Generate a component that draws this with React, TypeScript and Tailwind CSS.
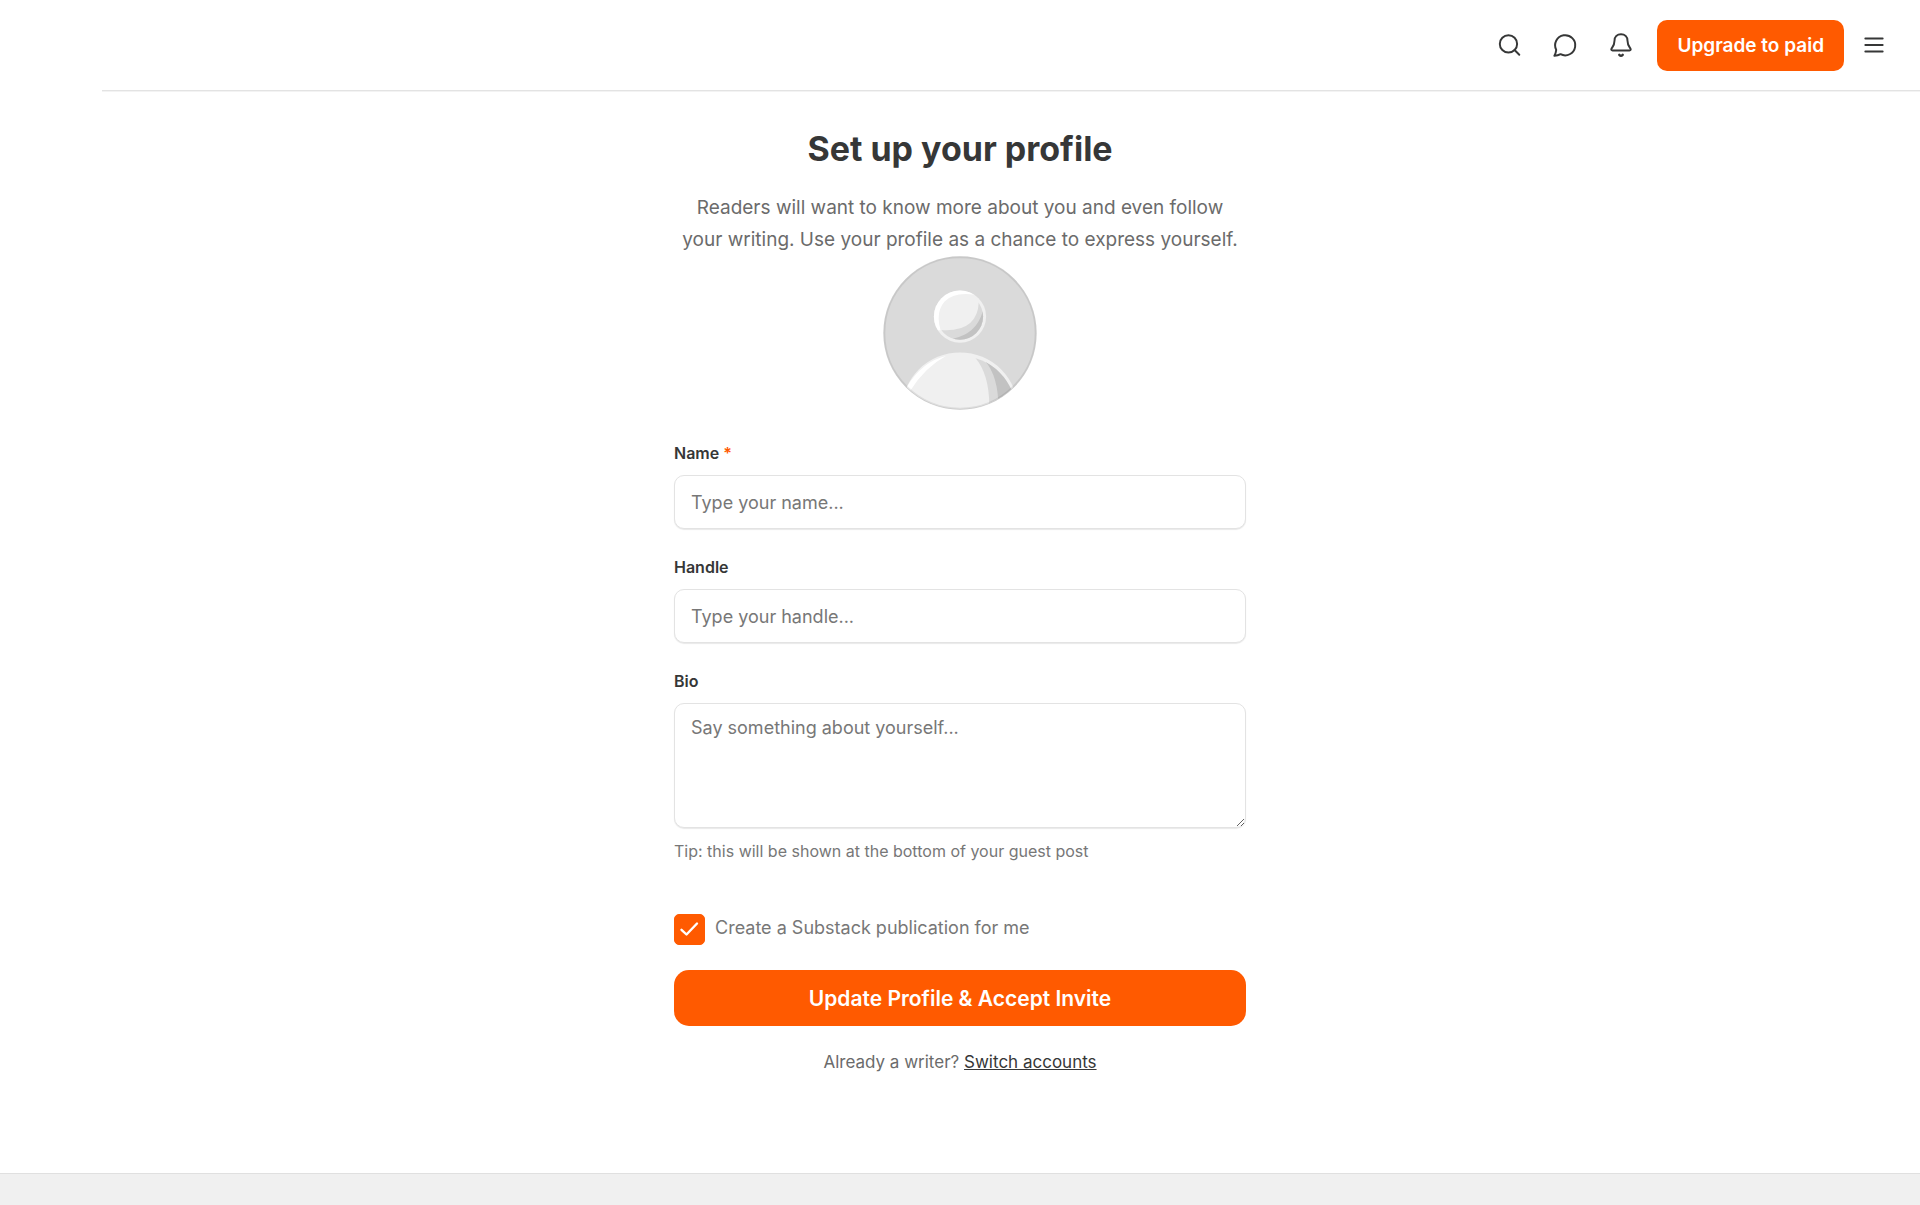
import React, { useState } from 'react';

interface FieldLabelProps {
  htmlFor: string;
  text: string;
  required?: boolean;
}

const inputClasses =
  'block w-full rounded-[10px] border border-[#e3e3e3] bg-white px-4 text-[18px] text-[#363737] placeholder:text-[#777777] shadow-[0_1px_1px_rgba(0,0,0,0.09)] outline-none focus:border-[#ff5a00]';

const FieldLabel: React.FC<FieldLabelProps> = ({ htmlFor, text, required }) => (
  <label htmlFor={htmlFor} className="block text-[16px] leading-6 font-semibold text-[#363737]">
    {text}
    {required && <span className="ml-1 text-[#ff5a00]">*</span>}
  </label>
);

const IconButton: React.FC<{ label: string; children: React.ReactNode }> = ({ label, children }) => (
  <button type="button" aria-label={label} className="flex size-14 items-center justify-center text-[#363737]">
    <svg
      viewBox="0 0 24 24"
      className="size-[26px]"
      fill="none"
      stroke="currentColor"
      strokeWidth="1.8"
      strokeLinecap="round"
      strokeLinejoin="round"
      aria-hidden="true"
    >
      {children}
    </svg>
  </button>
);

const Header: React.FC = () => (
  <header className="ml-[102px] flex h-[91px] items-center justify-end border-b border-[#e3e3e3] pr-[18px] shadow-[0_1px_0_#f3f3f3]">
    <IconButton label="Search">
      <circle cx="11.5" cy="11" r="8" />
      <path d="m21.5 21-4.35-4.35" />
    </IconButton>
    <IconButton label="Messages">
      <path d="M7.9 20.5A9.3 9.3 0 1 0 3.9 16.5Q3.6 19.5 2.2 22Q5.500 21.8 7.9 20.5Z" />
    </IconButton>
    <IconButton label="Notifications">
      <path d="M12 2C8.500 2 6 4.500 6 8C6 12 4.400 13.500 3.300 15.200C2.700 16.300 3.100 17 4.200 17H19.800C20.900 17 21.300 16.300 20.700 15.200C19.600 13.500 18 12 18 8C18 4.500 15.500 2 12 2Z" />
      <path d="M10.400 21.100Q12 22.700 13.600 21.100" strokeWidth="2.200" />
    </IconButton>
    <button
      type="button"
      className="mr-0.5 ml-2 h-[51px] rounded-[10px] bg-[#ff5a00] px-5 pt-0.5 text-[19px] font-semibold text-white"
    >
      Upgrade to paid
    </button>
    <IconButton label="Menu">
      <path d="M4 6h16M4 12h16M4 18h16" />
    </IconButton>
  </header>
);

const Avatar: React.FC = () => (
  <svg viewBox="40 32 460 460" className="size-[154px]" role="img" aria-label="Profile photo">
    <defs>
      <clipPath id="avatar-clip">
        <circle cx="270" cy="262" r="227" />
      </clipPath>
      <clipPath id="head-clip">
        <circle cx="270" cy="213" r="69" />
      </clipPath>
      <clipPath id="head-outline">
        <circle cx="270" cy="213" r="78" />
      </clipPath>
      <clipPath id="body-clip">
        <circle cx="270" cy="498" r="167" />
      </clipPath>
    </defs>
    <circle cx="270" cy="262" r="229" fill="#dadada" />
    <g clipPath="url(#avatar-clip)">
      <circle cx="270" cy="213" r="78" fill="#f0f0f0" />
      {/* highlight on the left of the head */}
      <path
        clipPath="url(#head-outline)"
        d="M212 254L180 254V130H310L316 148Q252 138 224 168Q196 200 212 254Z"
        fill="#ffffff"
      />
      <g clipPath="url(#head-clip)">
        <path d="M326 170Q322 260 214 253L214 300H350V170Z" fill="#dadada" />
        <path d="M338 198Q318 266 248 279L260 300H350V198Z" fill="#c2c2c2" />
      </g>
      <circle cx="270" cy="494" r="174" fill="#f0f0f0" />
      <path d="M111 423Q158 347 228 331Q166 364 122 434Z" fill="#ffffff" />
      <g clipPath="url(#body-clip)">
        <path d="M315 335Q362 390 357 500H450V335Z" fill="#dadada" />
        <path d="M344 345Q387 392 385 500H460V345Z" fill="#c2c2c2" />
      </g>
    </g>
    <circle cx="270" cy="262" r="226" fill="none" stroke="#000000" strokeOpacity="0.08" strokeWidth="6" />
  </svg>
);

export default function App() {
  const [createPublication, setCreatePublication] = useState(true);

  return (
    <div className="flex min-h-screen flex-col bg-white font-['Inter','Liberation_Sans',sans-serif]">
      <Header />

      <main className="mx-auto flex w-full max-w-[572px] flex-1 flex-col items-center pt-9">
        <h1 className="text-[34px] leading-[44px] font-bold text-[#363737]">Set up your profile</h1>
        <p className="mt-[21px] text-center text-[19px] leading-8 text-[#6b6b6b]">
          Readers will want to know more about you and even follow
          <br />
          your writing. Use your profile as a chance to express yourself.
        </p>
        <Avatar />

        <form className="mt-[31px] w-full" onSubmit={(e) => e.preventDefault()}>
          <FieldLabel htmlFor="name" text="Name" required />
          <input id="name" type="text" placeholder="Type your name..." className={`${inputClasses} mt-[10px] h-[54px]`} />

          <div className="mt-[26px]">
            <FieldLabel htmlFor="handle" text="Handle" />
            <input id="handle" type="text" placeholder="Type your handle..." className={`${inputClasses} mt-[10px] h-[54px]`} />
          </div>

          <div className="mt-[26px]">
            <FieldLabel htmlFor="bio" text="Bio" />
            <textarea
              id="bio"
              placeholder="Say something about yourself..."
              className={`${inputClasses} mt-[10px] h-[125px] py-2.5 leading-7`}
            />
            <p className="mt-[11px] text-[16px] leading-6 text-[#777777]">Tip: this will be shown at the bottom of your guest post</p>
          </div>

          <label className="mt-[51px] flex items-start gap-[10px] text-[18px] leading-7 text-[#777777]">
            <span className="relative flex">
              <input
                type="checkbox"
                checked={createPublication}
                onChange={(e) => setCreatePublication(e.target.checked)}
                className="size-[31px] appearance-none rounded-[5px] border border-[#e3e3e3] checked:border-[#ff5a00] checked:bg-[#ff5a00]"
              />
              {createPublication && (
                <svg
                  viewBox="0 0 31 31"
                  className="pointer-events-none absolute inset-0 size-full"
                  fill="none"
                  stroke="#ffffff"
                  strokeWidth="2.4"
                  strokeLinecap="round"
                  strokeLinejoin="round"
                  aria-hidden="true"
                >
                  <path d="M7.500 15.800 12.500 20.500 23 9.500" />
                </svg>
              )}
            </span>
            Create a Substack publication for me
          </label>

          <button
            type="submit"
            className="mt-[25px] h-14 w-full rounded-[15px] bg-[#ff5a00] pt-0.5 text-[21px] font-semibold text-white"
          >
            Update Profile &amp; Accept Invite
          </button>
        </form>

        <p className="mt-6 text-[17px] leading-6 text-[#6b6b6b]">
          Already a writer?{' '}
          <a href="#switch" className="text-[#363737] underline">
            Switch accounts
          </a>
        </p>
      </main>

      <footer className="h-8 border-t border-[#e0e0e0] bg-[#f0f0f0]" />
    </div>
  );
}
